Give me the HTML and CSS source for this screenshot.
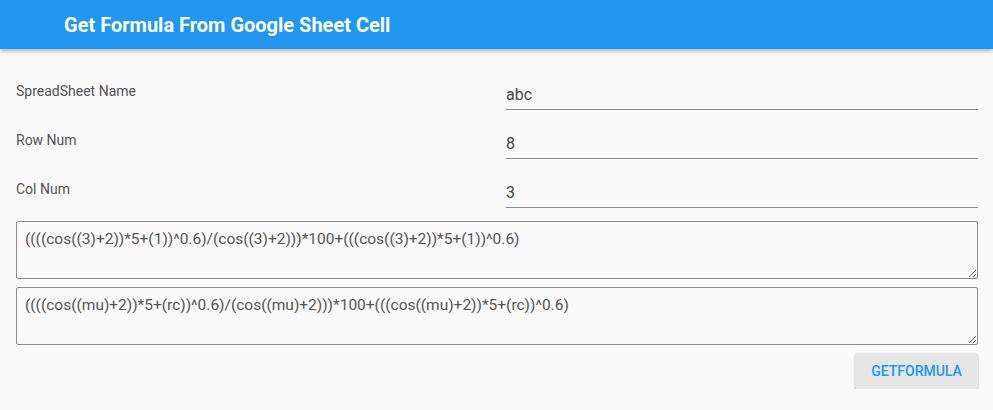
FILE: index.html
```html
<!DOCTYPE html>
<html lang="en">
<head>
    <meta charset="UTF-8">
    <meta name="viewport" content="width=device-width, initial-scale=1.0">
    <title>Get Formula From Google Sheet Cell</title>
    <link rel="stylesheet" href="styles.css">
</head>
<body>

    <header class="toolbar">
        <h1>Get Formula From Google Sheet Cell</h1>
    </header>

    <main class="content">
        <div class="fields">
            <label for="sheet">SpreadSheet Name</label>
            <input type="text" id="sheet" value="abc">

            <label for="row">Row Num</label>
            <input type="text" id="row" value="8">

            <label for="col">Col Num</label>
            <input type="text" id="col" value="3">
        </div>

        <textarea class="formula" id="resolved">((((cos((3)+2))*5+(1))^0.6)/(cos((3)+2)))*100+(((cos((3)+2))*5+(1))^0.6)</textarea>
        <textarea class="formula" id="raw">((((cos((mu)+2))*5+(rc))^0.6)/(cos((mu)+2)))*100+(((cos((mu)+2))*5+(rc))^0.6)</textarea>

        <div class="actions">
            <button class="btn">GETFORMULA</button>
        </div>
    </main>

</body>
</html>
```

FILE: styles.css
```css
body {
    margin: 0;
    font-family: Roboto, 'Noto Sans', sans-serif;
    background-color: #fafafa;
    color: #444;
}

.toolbar {
    height: 49px;
    background-color: #2196F3;
    box-shadow: 0 2px 4px rgba(0, 0, 0, 0.3);
    display: flex;
    align-items: center;
    padding-left: 64px;
}

.toolbar h1 {
    margin: 0;
    font-size: 20px;
    font-weight: 700;
    color: #fff;
}

.content {
    padding: 30px 15px 0 16px;
}

.fields {
    display: grid;
    grid-template-columns: 490px 1fr;
    row-gap: 18px;
}

label {
    font-size: 14px;
    line-height: 16px;
    padding-top: 4px;
    color: #555;
}

input {
    font-family: inherit;
    font-size: 16px;
    line-height: 19px;
    height: 31px;
    box-sizing: border-box;
    padding: 6px 0 5px;
    border: none;
    border-bottom: 1px solid #8a8a8a;
    background: transparent;
    color: #444;
    outline: none;
}

.formula {
    display: block;
    width: 100%;
    height: 58px;
    box-sizing: border-box;
    margin-top: 13px;
    padding: 8px;
    font-family: inherit;
    font-size: 15.5px;
    line-height: 18px;
    color: #555;
    background: transparent;
    border: 1px solid #8a8a8a;
    border-radius: 2px;
}

.formula + .formula {
    margin-top: 8px;
}

.actions {
    display: flex;
    justify-content: flex-end;
    margin-top: 8px;
}

.btn {
    width: 123px;
    height: 36px;
    font-family: inherit;
    font-size: 14px;
    font-weight: 500;
    color: #2196F3;
    background-color: #e6e6e6;
    border: none;
    border-radius: 2px;
    box-shadow: 0 2px 2px rgba(0, 0, 0, 0.24), 0 0 2px rgba(0, 0, 0, 0.12);
    cursor: pointer;
}
```
